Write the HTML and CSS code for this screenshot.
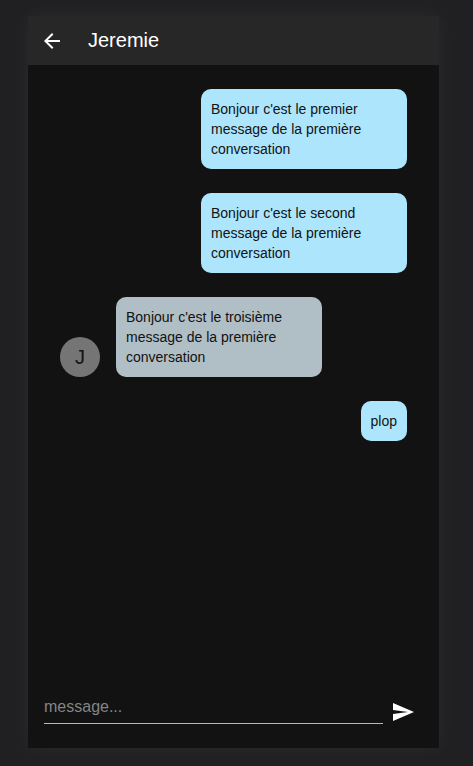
FILE: index.html
```html
<!DOCTYPE html>
<html lang="fr">
<head>
<meta charset="utf-8">
<meta name="viewport" content="width=device-width, initial-scale=1">
<title>Jeremie</title>
<link rel="stylesheet" href="styles.css">
</head>
<body>
<main class="chat">
  <header class="bar">
    <button class="icon-button" type="button" aria-label="Retour">
      <svg viewBox="0 0 24 24" width="24" height="24"><path d="M20 11H7.830l5.590-5.590L12 4l-8 8 8 8 1.410-1.410L7.830 13H20v-2z"/></svg>
    </button>
    <h1 class="title">Jeremie</h1>
  </header>
  <section class="messages">
    <div class="row mine"><p class="bubble">Bonjour c'est le premier message de la première conversation</p></div>
    <div class="row mine"><p class="bubble">Bonjour c'est le second message de la première conversation</p></div>
    <div class="row"><span class="avatar">J</span><p class="bubble">Bonjour c'est le troisième message de la première conversation</p></div>
    <div class="row mine"><p class="bubble">plop</p></div>
  </section>
  <form class="composer">
    <input class="field" type="text" placeholder="message..." aria-label="message">
    <button class="icon-button" type="button" aria-label="Envoyer">
      <svg viewBox="0 0 24 24" width="24" height="24"><path d="M2.010 21L23 12 2.010 3 2 10l15 2-15 2z"/></svg>
    </button>
  </form>
</main>
</body>
</html>
```
FILE: styles.css
```css
* {
  box-sizing: border-box;
}

body {
  margin: 0;
  min-height: 100vh;
  padding: 16px 34px 18px 28px;
  display: flex;
  background: #202022;
  color: #fff;
  font-family: "Liberation Sans", Arial, sans-serif;
}

.chat {
  flex: 1;
  min-width: 0;
  display: flex;
  flex-direction: column;
  background: #121212;
  box-shadow: 0 0 20px rgba(255, 255, 255, 0.05);
}

.bar {
  display: flex;
  align-items: center;
  gap: 24px;
  padding: 12px;
  background: #272727;
}

.title {
  margin: 0;
  font-size: 20px;
  line-height: 25px;
  font-weight: 400;
}

.icon-button {
  display: flex;
  padding: 0;
  border: 0;
  background: none;
  color: inherit;
}

.icon-button svg {
  fill: currentColor;
}

.messages {
  flex: 1;
  display: flex;
  flex-direction: column;
  gap: 24px;
  padding: 24px 32px;
}

.row {
  display: flex;
  align-items: flex-end;
  gap: 16px;
}

.mine {
  justify-content: flex-end;
}

.bubble {
  margin: 0;
  max-width: 206px;
  padding: 10px;
  border-radius: 10px;
  background: #b0bec5;
  color: #121212;
  font-size: 14px;
  line-height: 20px;
}

.mine .bubble {
  background: #ade6fc;
}

.avatar {
  display: flex;
  align-items: center;
  justify-content: center;
  width: 40px;
  height: 40px;
  border-radius: 50%;
  background: #757575;
  color: #121212;
  font-size: 20px;
}

.composer {
  display: flex;
  align-items: flex-end;
  gap: 8px;
  padding: 16px 24px 24px 16px;
}

.field {
  flex: 1;
  min-width: 0;
  height: 34px;
  padding: 0;
  border: 0;
  border-bottom: 1px solid #b9b9b9;
  outline: 0;
  background: none;
  color: inherit;
  font: inherit;
  font-size: 16px;
}

.field::placeholder {
  color: #858585;
  opacity: 1;
}
```
